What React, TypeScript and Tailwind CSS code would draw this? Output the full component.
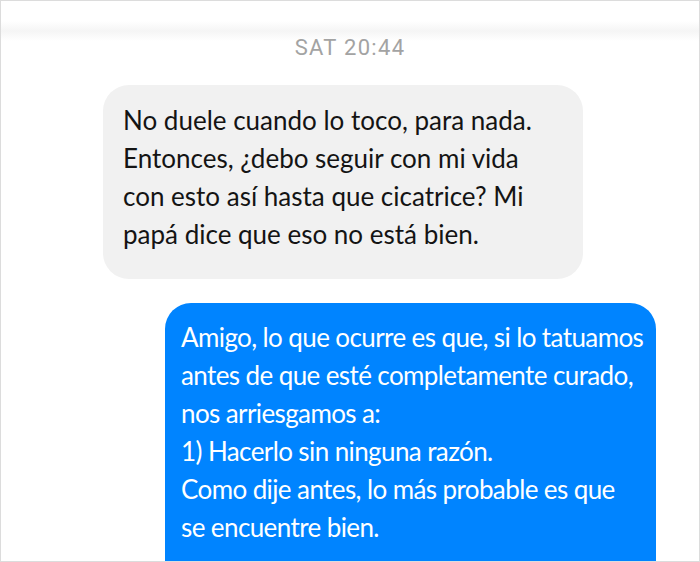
export default function App() {
  return (
    <div className="h-[562px] w-[700px] overflow-hidden border border-[#dcdcdc] bg-white font-['Lato',sans-serif]">
      <div className="mt-[20px] h-[20px] bg-gradient-to-b from-white via-[#f5f5f5] to-white" />
      <div className="-mt-[4px] text-center font-['Roboto',sans-serif] text-[22px] leading-[22px] tracking-[1.3px] text-[#a3a3a3]">
        SAT 20:44
      </div>
      <div className="mt-[26px] pl-[102px]">
        <div className="w-[480px] rounded-[26px] bg-[#f1f1f1] px-[20px] pt-[16px] pb-[26px] text-[26px] leading-[38px] text-[#141414]">
          No duele cuando lo toco, para nada.
          <br />
          Entonces, ¿debo seguir con mi vida
          <br />
          con esto así hasta que cicatrice? Mi
          <br />
          papá dice que eso no está bien.
        </div>
      </div>
      <div className="mt-[24px] pl-[164px]">
        <div className="w-[491px] whitespace-nowrap rounded-t-[26px] bg-[#0084ff] pl-[16px] pt-[15px] pb-[30px] text-[26px] leading-[38px] tracking-[-0.6px] text-white">
          Amigo, lo que ocurre es que, si lo tatuamos
          <br />
          antes de que esté completamente curado,
          <br />
          nos arriesgamos a:
          <br />
          1) Hacerlo sin ninguna razón.
          <br />
          Como dije antes, lo más probable es que
          <br />
          se encuentre bien.
        </div>
      </div>
    </div>
  );
}
